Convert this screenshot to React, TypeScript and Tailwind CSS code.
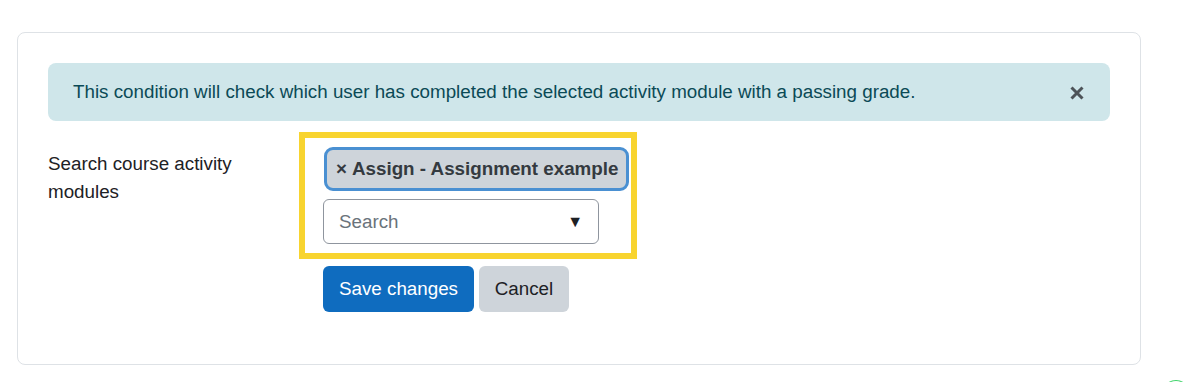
import React from "react";

export default function App() {
  return (
    <div
      className="relative w-[1190px] h-[382px] bg-white overflow-hidden"
      style={{ fontFamily: '"Liberation Sans", Arial, sans-serif' }}
    >
      <div className="pt-[32px] pl-[17px]">
        <div className="w-[1124px] h-[333px] border border-[#dee2e6] rounded-[8px] px-[30px] pt-[30px]">
          <div className="h-[58px] rounded-[8px] bg-[#cfe6ea] flex items-center justify-between pl-[25px] pr-[25px] text-[#0b4a56] text-[18.8px]">
            <span>This condition will check which user has completed the selected activity module with a passing grade.</span>
            <svg width="16" height="16" viewBox="0 0 16 16" className="mt-[1px]">
              <path d="M2.5 2.5 L13.5 13.5 M13.5 2.5 L2.5 13.5" stroke="#4d5358" strokeWidth="3" strokeLinecap="butt" />
            </svg>
          </div>
          <div className="flex mt-[11px]">
            <div className="w-[251px] pt-[18px] text-[18.8px] leading-[28px] text-[#1d2125]">
              Search course activity
              <br />
              modules
            </div>
            <div className="flex flex-col">
              <div className="w-[338px] h-[127px] border-[6px] border-[#f8d42f] pl-[18px] pt-[9px]">
                <div className="inline-flex items-center h-[44px] pl-[9px] pr-[8px] rounded-[9px] border-[3px] border-[#4a90d2] bg-[#ced4da] text-[#343a40] text-[18.8px] font-bold ml-[1px] whitespace-nowrap">
                  <span className="mr-[5px]">×</span>Assign - Assignment example
                </div>
                <div className="mt-[8px] w-[276px] h-[45px] border border-[#8f959e] rounded-[6px] flex items-center justify-between pl-[15px] pr-[15px] text-[18.8px] text-[#6a737b]">
                  <span className="mt-[1px]">Search</span>
                  <span className="text-[#1d2125] text-[16px]">▼</span>
                </div>
              </div>
              <div className="flex gap-[5px] mt-[7px] ml-[24px]">
                <button className="h-[46px] w-[151px] rounded-[6px] bg-[#0f6cbf] text-white text-[18.8px]">Save changes</button>
                <button className="h-[46px] w-[90px] rounded-[6px] bg-[#ced4da] text-[#1d2125] text-[18.8px]">Cancel</button>
              </div>
            </div>
          </div>
        </div>
      </div>
      <div className="absolute left-[1162px] top-[380px] w-[28px] h-[28px] rounded-full border border-[#e5e7eb] border-t-[#3fd46a] bg-white" />
    </div>
  );
}
